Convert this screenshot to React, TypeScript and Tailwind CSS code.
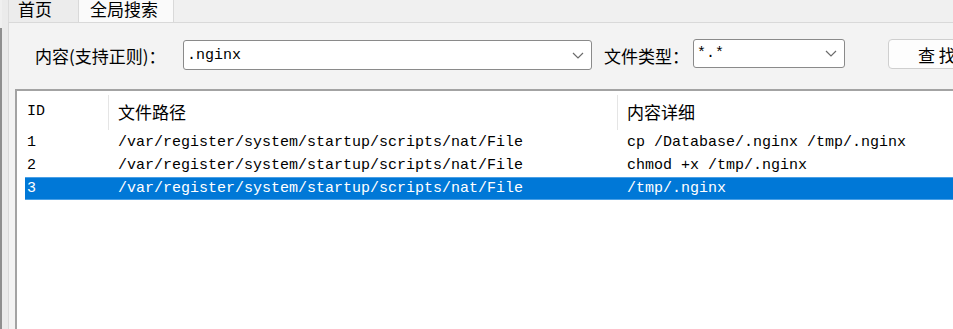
import React from 'react'

const cjk = "font-['Microsoft_YaHei','Noto_Sans_CJK_SC',sans-serif]"
const mono = "font-['Liberation_Mono','Noto_Sans_CJK_SC',monospace]"

const rows = [
  { id: '1', path: '/var/register/system/startup/scripts/nat/File', detail: 'cp /Database/.nginx /tmp/.nginx' },
  { id: '2', path: '/var/register/system/startup/scripts/nat/File', detail: 'chmod +x /tmp/.nginx' },
  { id: '3', path: '/var/register/system/startup/scripts/nat/File', detail: '/tmp/.nginx', selected: true },
]

function Chevron() {
  return (
    <svg width="12" height="7" viewBox="0 0 12 7" className="shrink-0">
      <path d="M1 1 L6 6 L11 1" fill="none" stroke="#6b6b6b" strokeWidth="1.2" />
    </svg>
  )
}

function Combo({ value, className, textClass }: { value: string; className: string; textClass: string }) {
  return (
    <div className={`flex items-center justify-between rounded-[3px] border border-[#8a8a8a] bg-white pl-[3px] pr-[7px] ${className}`}>
      <span className={`text-[15px] leading-none text-black ${textClass}`}>{value}</span>
      <Chevron />
    </div>
  )
}

export default function App() {
  return (
    <div className={`flex h-[329px] w-[953px] overflow-hidden bg-[#f0f0f0] text-black ${cjk}`}>
      {/* window frame edge */}
      <div className="mt-[28px] w-[2px] shrink-0 bg-[#8f8f8f]" />
      <div className="flex min-w-0 flex-1 flex-col bg-[#ebebeb] pl-[6px]">
        {/* tabs */}
        <div className="flex h-[22px] shrink-0 items-start bg-[#f0f0f0]">
          <div className="flex h-[22px] w-[70px] items-start border-l border-[#dcdcdc] bg-[#ececec] pl-[9px] text-[17px] leading-[17px]">
            首页
          </div>
          <div className="flex h-[22px] w-[96px] items-start border-x border-[#d9d9d9] bg-[#fafafa] pl-[11px] text-[17px] leading-[17px]">
            全局搜索
          </div>
          <div className="flex-1" />
        </div>

        {/* tab panel */}
        <div className="flex min-h-0 flex-1 flex-col border-l border-t border-[#d9d9d9] bg-[#f3f3f3]">
          <div className="mt-[17px] flex h-[30px] shrink-0 items-center pl-[26px]">
            <span className="w-[148px] shrink-0 text-[17px] leading-none">内容(支持正则)：</span>
            <Combo value=".nginx" className="h-[30px] w-[409px] shrink-0" textClass={mono} />
            <span className="ml-[12px] w-[89px] shrink-0 text-[17px] leading-none">文件类型：</span>
            <Combo value="*.*" className="-mt-[3px] h-[29px] w-[152px] shrink-0" textClass={mono} />
            <div className="-mt-[2px] ml-[43px] flex h-[30px] w-[100px] shrink-0 items-center rounded-[4px] border border-[#cfcfcf] bg-[#fdfdfd] pl-[29px] text-[17px] leading-none">
              查&nbsp;找
            </div>
          </div>

          {/* result list */}
          <div className="ml-[6px] mt-[19px] flex min-h-0 flex-1 flex-col border-l-2 border-t-2 border-[#a3a3a3] bg-white">
            <div className="flex h-[37px] shrink-0 items-center pt-[4px]">
              <div className={`w-[91px] shrink-0 pl-[10px] text-[15px] leading-none ${mono}`}>ID</div>
              <div className="h-[35px] w-px shrink-0 self-start bg-[#e5e5e5]" />
              <div className="w-[508px] shrink-0 pl-[9px] text-[17px] leading-none">文件路径</div>
              <div className="h-[35px] w-px shrink-0 self-start bg-[#e5e5e5]" />
              <div className="pl-[9px] text-[17px] leading-none">内容详细</div>
            </div>
            <div className={`ml-[8px] mt-[3px] flex flex-col text-[15px] ${mono}`}>
              {rows.map((row) => (
                <div
                  key={row.id}
                  className={`flex h-[23px] items-center leading-none ${
                    row.selected ? 'border-y border-[#4aa0e6] bg-[#0078d7] text-white' : 'text-black'
                  }`}
                >
                  <div className="w-[83px] shrink-0 pl-[2px]">{row.id}</div>
                  <div className="w-[509px] shrink-0 pl-[10px] whitespace-pre">{row.path}</div>
                  <div className="pl-[10px] whitespace-pre">{row.detail}</div>
                </div>
              ))}
            </div>
          </div>
        </div>
      </div>
    </div>
  )
}
